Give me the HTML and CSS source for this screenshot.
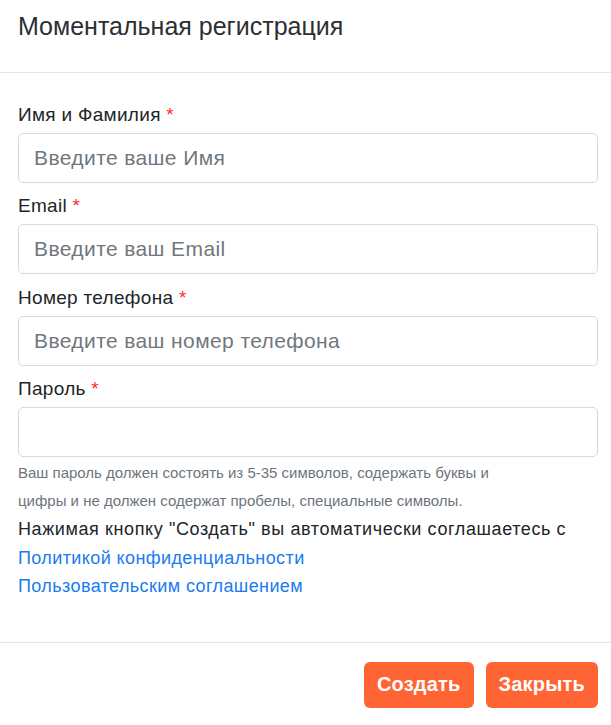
FILE: index.html
```html
<!DOCTYPE html>
<html lang="ru">
<head>
<meta charset="utf-8">
<link rel="stylesheet" href="styles.css">
</head>
<body>
<div class="modal">
  <div class="modal-header">
    <h5 class="modal-title">Моментальная регистрация</h5>
  </div>
  <div class="modal-body">
    <div class="group">
      <label class="label">Имя и Фамилия <span class="req">*</span></label>
      <input class="input" type="text" placeholder="Введите ваше Имя">
    </div>
    <div class="group">
      <label class="label">Email <span class="req">*</span></label>
      <input class="input" type="text" placeholder="Введите ваш Email">
    </div>
    <div class="group">
      <label class="label">Номер телефона <span class="req">*</span></label>
      <input class="input" type="text" placeholder="Введите ваш номер телефона">
    </div>
    <div class="group last">
      <label class="label">Пароль <span class="req">*</span></label>
      <input class="input" type="password">
    </div>
    <p class="help">Ваш пароль должен состоять из 5-35 символов, содержать буквы и цифры и не должен содержат пробелы, специальные символы.</p>
    <p class="agree">Нажимая кнопку "Создать" вы автоматически соглашаетесь с</p>
    <a class="link" href="#">Политикой конфиденциальности</a>
    <a class="link" href="#">Пользовательским соглашением</a>
  </div>
  <div class="modal-footer">
    <button class="btn">Создать</button>
    <button class="btn">Закрыть</button>
  </div>
</div>
</body>
</html>
```
FILE: styles.css
```css
* { box-sizing: border-box; }
body {
  margin: 0;
  background: #fff;
  font-family: "Liberation Sans", Arial, sans-serif;
  color: #212529;
}
.modal {
  width: 611px;
  display: flex;
  flex-direction: column;
}
.modal-header {
  height: 73px;
  padding: 8px 18px 0 18px;
  border-bottom: 1px solid #e2e5e9;
}
.modal-title {
  margin: 0;
  font-size: 25px;
  font-weight: 400;
  line-height: 36px;
  color: #2b2f33;
}
.modal-body {
  padding: 30px 13px 0 18px;
  display: flex;
  flex-direction: column;
}
.group {
  display: flex;
  flex-direction: column;
  margin-bottom: 11.3px;
}
.group.last { margin-bottom: 0; }
.label {
  font-size: 19px;
  letter-spacing: 0.3px;
  line-height: 24px;
  margin-bottom: 6px;
  color: #212529;
}
.req { color: #ff2a2a; }
.input {
  height: 50px;
  width: 100%;
  border: 1px solid #d5dadf;
  border-radius: 5px;
  padding: 0 15px;
  font-family: inherit;
  font-size: 21px;
  letter-spacing: 0.4px;
  color: #495057;
  outline: none;
}
.input::placeholder { color: #70777e; }
.help {
  margin: 0;
  max-width: 510px;
  padding-top: 2px;
  font-size: 15px;
  line-height: 28px;
  color: #6c757d;
}
.agree {
  margin: 0;
  font-size: 18px;
  letter-spacing: 0.6px;
  line-height: 29px;
  color: #212529;
}
.link {
  font-size: 18px;
  letter-spacing: 0.4px;
  line-height: 28px;
  color: #1a7bf0;
  text-decoration: none;
}
.modal-footer {
  margin-top: 42px;
  border-top: 1px solid #e2e5e9;
  padding: 19px 13px 16px;
  display: flex;
  justify-content: flex-end;
  gap: 12px;
}
.btn {
  height: 46px;
  padding: 0 13px;
  border: none;
  border-radius: 6px;
  background: #ff6434;
  color: #fff;
  font-family: inherit;
  font-size: 20px;
  letter-spacing: 0.2px;
  font-weight: 700;
}
```
